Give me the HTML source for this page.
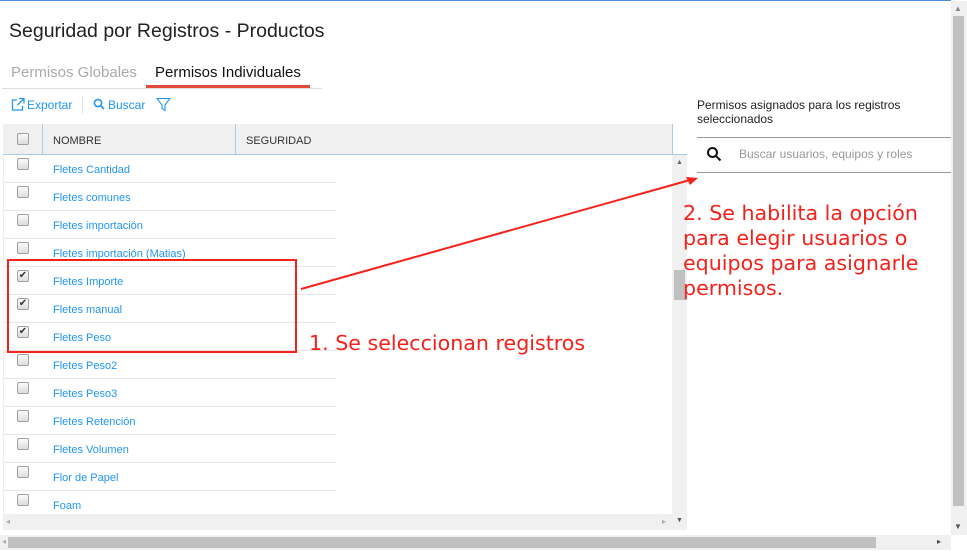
<!DOCTYPE html>
<html><head><meta charset="utf-8"><style>
*{box-sizing:border-box;margin:0;padding:0}
body{width:967px;height:558px;overflow:hidden;background:#fff;font-family:"Liberation Sans",sans-serif;position:relative}
.a{position:absolute}
.lnk{color:#2196f3;font-size:11px}
.cb{position:absolute;left:17px;width:12px;height:12px;border:1px solid #a0a0a0;border-radius:2px;background:linear-gradient(#fafafa,#ddd)}
.row{position:absolute;left:3px;width:333px;height:28px;border-bottom:1px solid #e6e6e6}
.row span{position:absolute;left:50px;top:9px}
.red{color:#f5221b;font-family:"DejaVu Sans",sans-serif;font-size:20.6px}
</style></head><body>
<div class="a" style="left:0;top:0;width:951px;height:1px;background:#4a90d9"></div>
<div class="a" style="left:9px;top:20px;font-size:19.5px;color:#222">Seguridad por Registros - Productos</div>
<div class="a" style="left:11px;top:64px;font-size:15px;color:#aaa">Permisos Globales</div>
<div class="a" style="left:155px;top:64px;font-size:15px;color:#111">Permisos Individuales</div>
<div class="a" style="left:146px;top:85px;width:164px;height:3px;background:#e04a36"></div>
<div class="a" style="left:2px;top:88px;width:320px;height:1px;background:#ddd"></div>
<svg class="a" style="left:11px;top:97px" width="15" height="15" viewBox="0 0 15 15" fill="none" stroke="#2196f3" stroke-width="1.3"><path d="M6 3H1.5v10h10V9"/><path d="M8 1.5h5v5M13 1.5L6.5 8"/></svg>
<div class="a lnk" style="left:27px;top:98px;font-size:12px">Exportar</div>
<div class="a" style="left:82px;top:96px;width:1px;height:18px;background:#e4e4e4"></div>
<svg class="a" style="left:93px;top:98px" width="12" height="12" viewBox="0 0 12 12" fill="none" stroke="#2196f3" stroke-width="1.6"><circle cx="5" cy="5" r="3.6"/><path d="M7.6 7.6L11 11"/></svg>
<div class="a lnk" style="left:108px;top:98px;font-size:12px">Buscar</div>
<svg class="a" style="left:156px;top:97px" width="15" height="15" viewBox="0 0 15 15" fill="none" stroke="#2196f3" stroke-width="1.1"><path d="M1 1.5h13L9 8v5.5L6 11.5V8z"/></svg>
<div class="a" style="left:3px;top:124px;width:669px;height:31px;background:#f0f0f0;border-bottom:1px solid #a9cbe8"></div>
<div class="a" style="left:672px;top:124px;width:15px;height:31px;border:1px solid #a9cbe8;border-top:none;border-right:none"></div>
<div class="a" style="left:42px;top:124px;width:1px;height:31px;background:#a9cbe8"></div>
<div class="a" style="left:235px;top:124px;width:1px;height:31px;background:#a9cbe8"></div>
<div class="cb" style="top:133px"></div>
<div class="a" style="left:53px;top:135px;font-size:11px;color:#333">NOMBRE</div>
<div class="a" style="left:246px;top:135px;font-size:11px;color:#333">SEGURIDAD</div>
<div class="row" style="top:155px"><div class="cb" style="left:14px;top:3px"></div><span class="lnk">Fletes Cantidad</span></div>
<div class="row" style="top:183px"><div class="cb" style="left:14px;top:3px"></div><span class="lnk">Fletes comunes</span></div>
<div class="row" style="top:211px"><div class="cb" style="left:14px;top:3px"></div><span class="lnk">Fletes importación</span></div>
<div class="row" style="top:239px"><div class="cb" style="left:14px;top:3px"></div><span class="lnk">Fletes importación (Matias)</span></div>
<div class="row" style="top:267px"><div class="cb" style="left:14px;top:3px;font-size:10px;line-height:10px;color:#333;text-align:center">✔</div><span class="lnk">Fletes Importe</span></div>
<div class="row" style="top:295px"><div class="cb" style="left:14px;top:3px;font-size:10px;line-height:10px;color:#333;text-align:center">✔</div><span class="lnk">Fletes manual</span></div>
<div class="row" style="top:323px"><div class="cb" style="left:14px;top:3px;font-size:10px;line-height:10px;color:#333;text-align:center">✔</div><span class="lnk">Fletes Peso</span></div>
<div class="row" style="top:351px"><div class="cb" style="left:14px;top:3px"></div><span class="lnk">Fletes Peso2</span></div>
<div class="row" style="top:379px"><div class="cb" style="left:14px;top:3px"></div><span class="lnk">Fletes Peso3</span></div>
<div class="row" style="top:407px"><div class="cb" style="left:14px;top:3px"></div><span class="lnk">Fletes Retención</span></div>
<div class="row" style="top:435px"><div class="cb" style="left:14px;top:3px"></div><span class="lnk">Fletes Volumen</span></div>
<div class="row" style="top:463px"><div class="cb" style="left:14px;top:3px"></div><span class="lnk">Flor de Papel</span></div>
<div class="row" style="top:491px;border:none"><div class="cb" style="left:14px;top:3px"></div><span class="lnk">Foam</span></div>
<div class="a" style="left:3px;top:155px;width:1px;height:360px;background:#eee"></div>
<div class="a" style="left:672px;top:155px;width:15px;height:375px;background:#f0f0f0"></div>
<div class="a" style="left:674px;top:270px;width:11px;height:30px;background:#c0c0c0"></div>
<div class="a" style="left:676px;top:159px;font-size:7px;color:#666">▲</div>
<div class="a" style="left:676px;top:517px;font-size:7px;color:#555">▼</div>
<div class="a" style="left:3px;top:514px;width:669px;height:16px;background:#f0f0f0"></div>
<div class="a" style="left:6px;top:517px;font-size:8px;color:#aaa">◂</div>
<div class="a" style="left:662px;top:517px;font-size:8px;color:#aaa">▸</div>
<div class="a" style="left:697px;top:98px;font-size:12px;color:#222;line-height:14px;width:240px">Permisos asignados para los registros seleccionados</div>
<div class="a" style="left:697px;top:137px;width:254px;height:1px;background:#999"></div>
<svg class="a" style="left:706px;top:146px" width="16" height="16" viewBox="0 0 16 16" fill="none" stroke="#111" stroke-width="2"><circle cx="6.5" cy="6.5" r="4.5"/><path d="M10 10l4.5 4.5"/></svg>
<div class="a" style="left:739px;top:147px;font-size:12px;color:#999">Buscar usuarios, equipos y roles</div>
<div class="a" style="left:697px;top:172px;width:254px;height:1px;background:#999"></div>
<div class="a" style="left:7px;top:259px;width:290px;height:94px;border:2px solid #f5221b"></div>
<svg class="a" style="left:0;top:0" width="967" height="558"><path d="M301 289L690 180" stroke="#f5221b" stroke-width="2"/><path d="M698 178l-12 -1l4 8z" fill="#f5221b"/></svg>
<div class="a red" style="left:309px;top:331px">1. Se seleccionan registros</div>
<div class="a red" style="left:683px;top:201px;line-height:25px">2. Se habilita la opción<br>para elegir usuarios o<br>equipos para asignarle<br>permisos.</div>
<div class="a" style="left:951px;top:1px;width:16px;height:534px;background:#f0f0f0"></div>
<div class="a" style="left:953px;top:16px;width:11px;height:490px;background:#c0c0c0"></div>
<div class="a" style="left:954px;top:4px;font-size:8px;color:#888">▲</div>
<div class="a" style="left:954px;top:522px;font-size:8px;color:#555">▼</div>
<div class="a" style="left:0;top:535px;width:951px;height:15px;background:#f0f0f0"></div>
<div class="a" style="left:8px;top:537px;width:868px;height:11px;background:#c0c0c0"></div>
<div class="a" style="left:2px;top:537px;font-size:8px;color:#aaa">◂</div>
<div class="a" style="left:937px;top:537px;font-size:8px;color:#444">▸</div>
</body></html>
